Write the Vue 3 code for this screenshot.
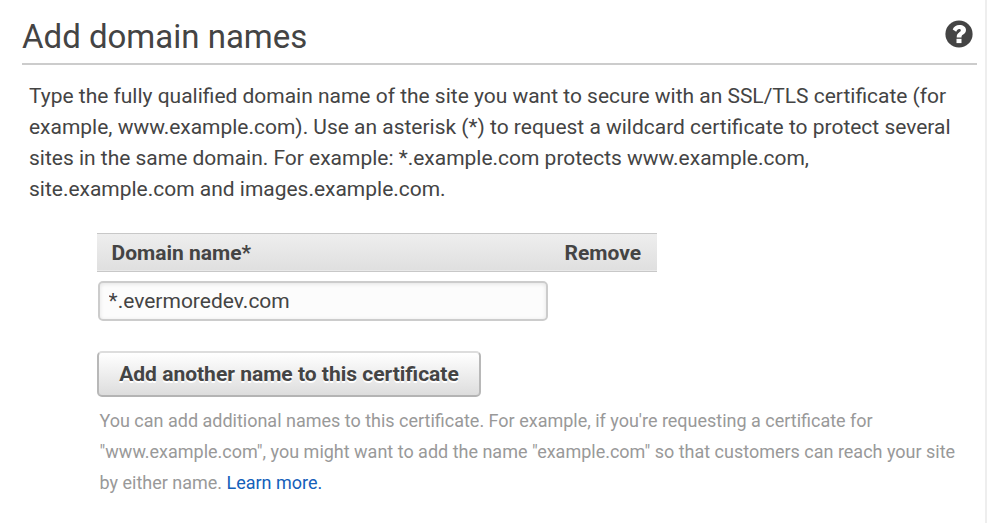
<script setup>
</script>

<template>
  <main class="page">
    <header class="head">
      <h1>Add domain names</h1>
      <svg class="help" viewBox="0 0 28 28" aria-label="Help">
        <circle cx="14" cy="14" r="13.6" fill="#444" />
        <path d="M7.7 9.6C8.9 6.5 11.1 5 14.3 5C18.3 5 21 7 21 10.1C21 12.4 19.7 13.6 18.2 14.5C16.8 15.4 16.5 15.8 16.5 17.4H11.7C11.7 14.6 12.3 13.6 14.1 12.4C15.2 11.7 15.8 11.3 15.8 10.3C15.8 9.4 15.1 8.9 14.1 8.9C12.8 8.9 12.1 9.8 11.2 11.8Z" fill="#fff" />
        <rect x="11.5" y="18.8" width="5" height="4.3" fill="#fff" />
      </svg>
    </header>
    <p class="intro">
      Type the fully qualified domain name of the site you want to secure with an SSL/TLS certificate (for<br>
      example, www.example.com). Use an asterisk (*) to request a wildcard certificate to protect several<br>
      sites in the same domain. For example: *.example.com protects www.example.com,<br>
      site.example.com and images.example.com.
    </p>
    <section class="form">
      <div class="thead"><span>Domain name*</span><span>Remove</span></div>
      <input class="field" value="*.evermoredev.com" aria-label="Domain name">
      <button class="add">Add another name to this certificate</button>
      <p class="hint">
        You can add additional names to this certificate. For example, if you're requesting a certificate for<br>
        "www.example.com", you might want to add the name "example.com" so that customers can reach your site<br>
        by either name. <a>Learn more.</a>
      </p>
    </section>
  </main>
</template>

<style>
body { background: #fff; overflow: hidden; }
</style>

<style scoped>
* { box-sizing: border-box; }
.page {
  width: 987px;
  height: 523px;
  padding: 0 8px 0 22px;
  border-right: 2px solid #eee;
  font-family: Roboto, sans-serif;
  color: #444;
  white-space: nowrap;
}
.head {
  display: flex;
  justify-content: space-between;
  width: 955px;
  height: 65px;
  border-bottom: 2px solid #ccc;
}
h1 { margin: 17px 0 0; font-size: 33px; line-height: 40px; font-weight: 400; }
.help { width: 28px; height: 28px; margin: 20px 4px 0 0; }
.intro { margin: 16px 0 0 7px; font-size: 20.98px; line-height: 31px; }
.form { margin: 28px 0 0 75px; }
.thead {
  display: flex;
  justify-content: space-between;
  width: 560px;
  height: 39px;
  padding: 0 16px 0 14.6px;
  border-top: 1px solid #c8c8c8;
  border-bottom: 1px solid #c8c8c8;
  background: linear-gradient(#eee, #dfdfdf);
  box-shadow: inset 0 -1px #e9e9e9;
  font-size: 21px;
  line-height: 38px;
  font-weight: 700;
}
.field {
  display: block;
  width: 450px;
  height: 40px;
  margin: 9px 0 0 1px;
  padding: 0 8.6px;
  border: 2px solid #ccc;
  border-radius: 5px;
  background: #fcfcfc;
  box-shadow: inset 0 1px 4px rgba(0, 0, 0, 0.1);
  font: 21px Roboto, sans-serif;
  color: #444;
}
.add {
  display: block;
  width: 384px;
  height: 46px;
  margin: 30px 0 0;
  padding: 0;
  border: 2px solid;
  border-color: #ddd #b8b8b8 #b4b4b4;
  border-radius: 5px;
  background: linear-gradient(#fff, #ddd);
  font: 700 21px Roboto, sans-serif;
  color: #444;
  text-shadow: 0 2px #fff;
}
.hint { margin: 8px 0 0 2.5px; font-size: 17.99px; line-height: 31px; color: #999; }
.hint a { color: #1460ba; }
</style>
